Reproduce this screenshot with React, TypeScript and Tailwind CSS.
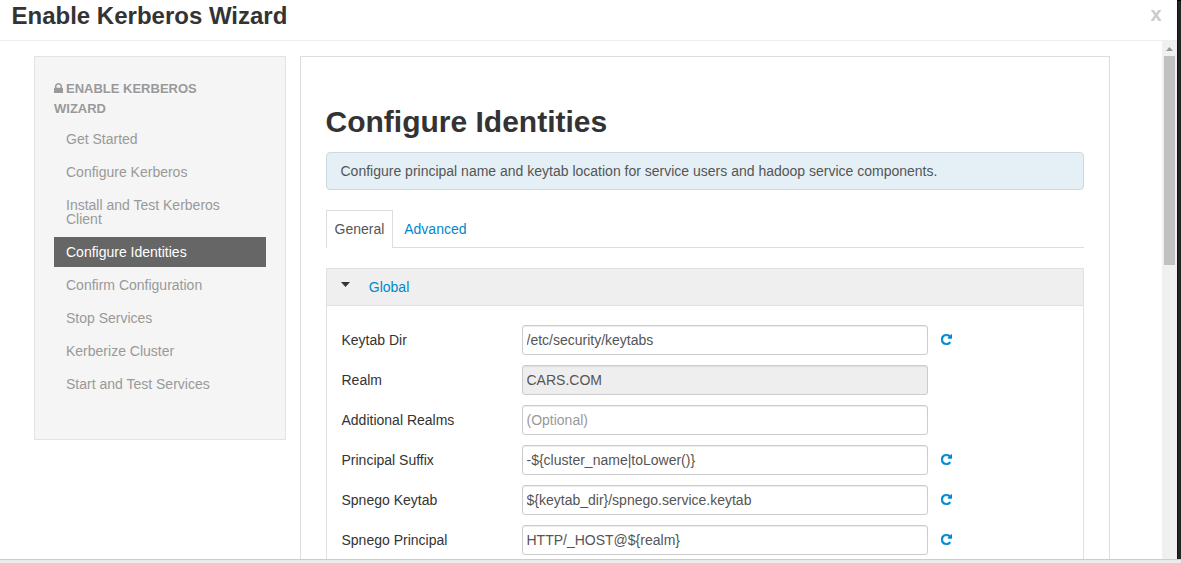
import React from "react";

const steps = [
  "Get Started",
  "Configure Kerberos",
  "Install and Test Kerberos Client",
  "Configure Identities",
  "Confirm Configuration",
  "Stop Services",
  "Kerberize Cluster",
  "Start and Test Services",
];

type Field = { label: string; value: string; disabled?: boolean; placeholder?: string; resettable?: boolean };

const fields: Field[] = [
  { label: "Keytab Dir", value: "/etc/security/keytabs", resettable: true },
  { label: "Realm", value: "CARS.COM", disabled: true },
  { label: "Additional Realms", value: "", placeholder: "(Optional)" },
  { label: "Principal Suffix", value: "-${cluster_name|toLower()}", resettable: true },
  { label: "Spnego Keytab", value: "${keytab_dir}/spnego.service.keytab", resettable: true },
  { label: "Spnego Principal", value: "HTTP/_HOST@${realm}", resettable: true },
];

function LockIcon() {
  return (
    <svg
      viewBox="320 128 1152 1408"
      preserveAspectRatio="none"
      className="mr-[3px] inline-block h-[10.5px] w-[9px] align-[0px]"
      fill="currentColor"
    >
      <path d="M640 768h512v-192q0-106-75-181t-181-75-181 75-75 181v192zm832 96v576q0 40-28 68t-68 28h-960q-40 0-68-28t-28-68v-576q0-40 28-68t68-28h32v-192q0-184 132-316t316-132 316 132 132 316v192h32q40 0 68 28t28 68z" />
    </svg>
  );
}

function RepeatIcon() {
  return (
    <svg viewBox="128 128 1536 1536" className="size-[11px]" fill="currentColor" stroke="currentColor" strokeWidth="60">
      <path d="M1664 256v448q0 26-19 45t-45 19h-448q-42 0-59-40-17-39 14-69l138-138q-148-137-349-137-104 0-198.5 40.5t-163.5 109.5-109.5 163.5-40.5 198.5 40.5 198.5 109.5 163.5 163.5 109.5 198.5 40.5q119 0 225-52t179-147q7-10 23-12 15 0 25 9l137 138q9 8 9.5 20.5t-7.5 22.5q-109 132-264 204.5t-327 72.5q-156 0-298-61t-245-164-164-245-61-298 61-298 164-245 245-164 298-61q147 0 284.5 55.5t244.5 156.5l130-129q29-31 70-14 39 17 39 59z" />
    </svg>
  );
}

function Sidebar() {
  return (
    <aside className="h-[384px] w-[252px] shrink-0 border border-[#e3e3e3] bg-[#f5f5f5] px-[19px] pt-[22px]">
      <h2 className="pr-[30px] text-[13px] leading-5 font-bold text-[#999] uppercase [text-shadow:0_1px_0_rgba(255,255,255,0.5)]">
        <LockIcon />
        Enable Kerberos Wizard
      </h2>
      <ul className="mt-[5px] flex flex-col gap-[3px]">
        {steps.map((step) => (
          <li
            key={step}
            className={
              step === "Configure Identities"
                ? "bg-[#666] px-3 py-2 text-sm leading-[14px] text-white"
                : "px-3 py-2 text-sm leading-[14px] text-[#999]"
            }
          >
            {step}
          </li>
        ))}
      </ul>
    </aside>
  );
}

function FieldRow({ field }: { field: Field }) {
  return (
    <div className="flex h-[30px] items-center">
      <label className="w-[180px] shrink-0">{field.label}</label>
      <input
        className="h-[30px] w-[406px] rounded-[3px] border border-[#ccc] bg-white px-1 text-sm text-[#555] shadow-[inset_0_1px_1px_rgba(0,0,0,0.075)] placeholder:text-[#999] disabled:bg-[#eee]"
        defaultValue={field.value}
        placeholder={field.placeholder}
        disabled={field.disabled}
      />
      {field.resettable && (
        <button className="mb-px ml-[13px] text-[#0088cc]" aria-label="Reset">
          <RepeatIcon />
        </button>
      )}
    </div>
  );
}

function Content() {
  return (
    <section className="h-[600px] w-[810px] shrink-0 border border-[#ddd] px-[25px] pt-[45px]">
      <h1 className="-ml-[0.5px] text-[30px] leading-10 font-bold">Configure Identities</h1>
      <div className="mt-[10px] flex h-[38px] items-center rounded border border-[#cbdadf] bg-[#e4f0f5] px-[13.5px] text-[#555]">
        Configure principal name and keytab location for service users and hadoop service components.
      </div>
      <div className="mt-5 flex h-[38px] items-stretch">
        <div className="flex w-[67px] items-center justify-center border border-b-0 border-[#ddd] pb-px text-[#555]">General</div>
        <div className="flex flex-1 items-center border-b border-[#ddd] pt-px pl-[11.25px] text-[#0088cc]">Advanced</div>
      </div>
      <div className="mt-5 h-[400px] border border-[#e1e1e1]">
        <div className="flex h-[37px] items-center border-b border-[#e1e1e1] bg-[#efefef] pl-[14px] text-[#0088cc]">
          <svg viewBox="0 0 9 5" className="mt-[-5px] mr-[18.8px] h-[5px] w-[9px]" fill="#333">
            <path d="M0 0h9L4.5 5z" />
          </svg>
          Global
        </div>
        <div className="flex flex-col gap-[10px] pt-[19px] pl-[14.5px]">
          {fields.map((field) => (
            <FieldRow key={field.label} field={field} />
          ))}
        </div>
      </div>
    </section>
  );
}

export default function App() {
  return (
    <div className="flex h-[563px] w-[1181px] flex-col overflow-hidden bg-white font-['Liberation_Sans',Arial,sans-serif] text-sm leading-5 text-[#333]">
      <div className="flex h-[559px] shrink-0">
        <div className="flex w-[1177px] flex-col">
          <header className="flex h-[41px] shrink-0 justify-between border-b border-[#eee] pr-[15.5px] pl-[11.5px]">
            <div className="pt-px text-[24px] leading-[30px] font-bold">Enable Kerberos Wizard</div>
            <button className="h-[28px] text-[20px] leading-[28px] font-bold text-[#ccc]" aria-label="Close">
              x
            </button>
          </header>
          <div className="flex min-h-0 flex-1 overflow-hidden">
            <main className="flex flex-1 items-start gap-[14px] pt-[15px] pl-[34px]">
              <Sidebar />
              <Content />
            </main>
            <div className="flex w-[15px] flex-col items-center bg-[#f0f0f0] pr-px pl-[1px]">
              <svg viewBox="0 0 7 4" className="mt-[6px] mb-[5px] h-[4px] w-[7px] shrink-0" fill="#999">
                <path d="M3.5 0L7 4H0z" />
              </svg>
              <div className="h-[209px] w-[11px] bg-[#c1c1c1]" />
            </div>
          </div>
        </div>
        <div className="w-1 border-t border-black bg-[#242424] shadow-[inset_1px_0_0_#111]" />
      </div>
      <footer className="h-1 shrink-0 border-t border-[#ccc] bg-[#ebebeb]" />
    </div>
  );
}
